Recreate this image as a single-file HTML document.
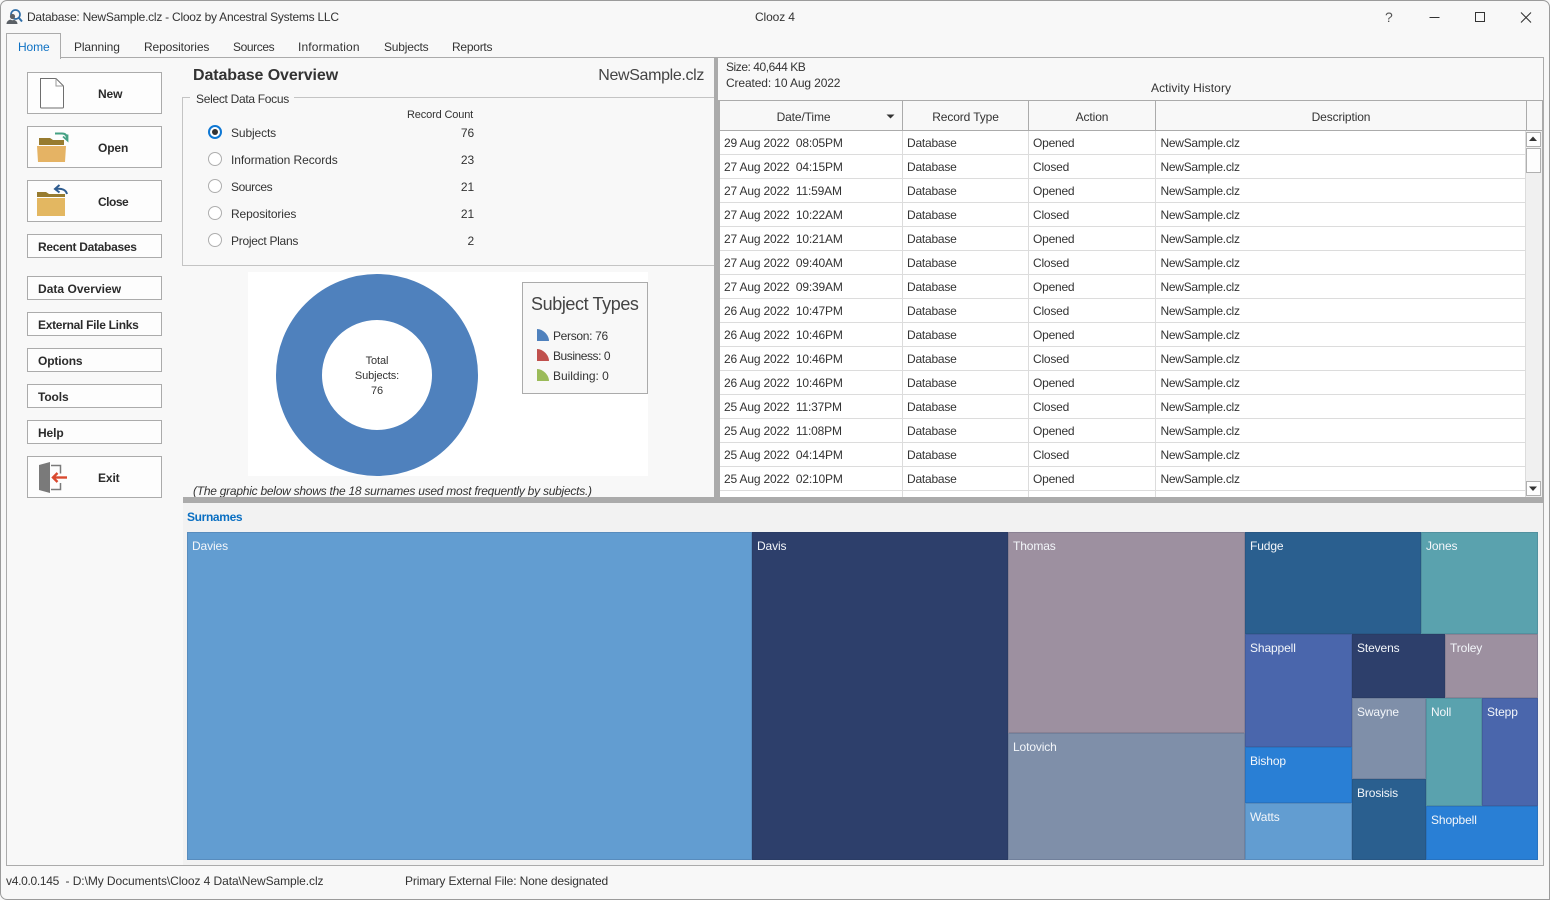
<!DOCTYPE html>
<html><head><meta charset="utf-8"><title>Clooz</title>
<style>
html,body{margin:0;padding:0;width:1550px;height:900px;overflow:hidden;background:#f8f8f8}
body{position:relative;font:12px/16px "Liberation Sans",sans-serif;color:#333;letter-spacing:-.12px}
div,svg,span.t{position:absolute}
.t{white-space:nowrap}
.b{background:#fdfdfd;border:1px solid #ababab;box-sizing:border-box;outline:0;font-weight:bold;color:#2b2b2b;white-space:nowrap}
.s{left:27px;width:135px;height:24px;line-height:24px;padding-left:10px}
.l{left:27px;width:135px;height:42px;line-height:42px}
.l span{position:absolute;top:0}
.r{width:14px;height:14px;box-sizing:border-box;border:1px solid #aeaeae;border-radius:50%;background:#fff;left:208px}
.h{top:109px;height:16px;text-align:center}
table{position:absolute;left:720px;top:131px;width:806px;border-collapse:collapse;table-layout:fixed;background:#fff}
td{height:21px;padding:2px 0 0 4.5px;border-bottom:1px solid #dcdcdc;border-right:1px solid #dcdcdc;white-space:nowrap;overflow:hidden;line-height:21px;color:#333;letter-spacing:-.22px}
td:first-child{padding-left:4px;letter-spacing:-.17px}
td:last-child{padding-left:5px;letter-spacing:-.27px}
.m div{box-sizing:border-box;padding:6px 0 0 5px;color:#f3f6fa;font-size:12px;line-height:16px;box-shadow:inset 0 0 0 1px rgba(30,40,70,.14)}
</style></head><body>
<!-- window frame -->
<div style="left:0;top:0;width:1548px;height:898px;border:1px solid #9b9b9b;border-radius:7px 7px 0 7px"></div>
<!-- title bar -->
<svg style="left:6px;top:8px" width="17" height="17" viewBox="0 0 17 17"><circle cx="9.500" cy="6.500" r="4.500" fill="none" stroke="#2f6ea8" stroke-width="1.700"/><path d="M13 10l3 3.500" stroke="#2f6ea8" stroke-width="2"/><path d="M0.500 16c0-2.500 2-4 4-4.500 .8.800 2.500 1 3.600.400 1.700.600 3.400 1.800 3.400 4.100z" fill="#5b6066"/><circle cx="6.500" cy="8.500" r="2.600" fill="#5b6066"/></svg>
<span class="t" style="left:27px;top:9px;letter-spacing:-.245px">Database: NewSample.clz - Clooz by Ancestral Systems LLC</span>
<span class="t" style="left:755px;top:9px">Clooz 4</span>
<span class="t" style="left:1385px;top:9px;color:#555;font-size:14px">?</span>
<svg style="left:1420px;top:8px" width="120" height="18"><path d="M9.500 9.500h10" stroke="#333"/><rect x="55.500" y="4.500" width="9" height="9" fill="none" stroke="#333"/><path d="M101 4.500l10 10M111 4.500l-10 10" stroke="#333" stroke-width="1.100"/></svg>
<!-- tabs -->
<div style="left:6px;top:57px;width:1536px;height:807px;border:1px solid #ababab;box-sizing:content-box"></div>
<div style="left:6px;top:33px;width:53px;height:25px;border:1px solid #ababab;border-bottom:0;background:#f8f8f8"></div>
<span class="t" style="left:18px;top:39px;color:#0f72c4">Home</span>
<span class="t" style="left:74px;top:39px">Planning</span>
<span class="t" style="left:144px;top:39px">Repositories</span>
<span class="t" style="left:233px;top:39px;letter-spacing:-.4px">Sources</span>
<span class="t" style="left:298px;top:39px;letter-spacing:.15px">Information</span>
<span class="t" style="left:384px;top:39px;letter-spacing:-.2px">Subjects</span>
<span class="t" style="left:452px;top:39px;letter-spacing:-.25px">Reports</span>
<!-- left buttons -->
<div class="b l" style="top:72px"><span style="left:70px">New</span></div>
<div class="b l" style="top:126px"><span style="left:70px">Open</span></div>
<div class="b l" style="top:180px"><span style="left:70px;letter-spacing:-.5px">Close</span></div>
<div class="b s" style="top:234px;letter-spacing:-.3px">Recent Databases</div>
<div class="b s" style="top:276px;letter-spacing:.03px">Data Overview</div>
<div class="b s" style="top:312px;letter-spacing:-.29px">External File Links</div>
<div class="b s" style="top:348px">Options</div>
<div class="b s" style="top:384px">Tools</div>
<div class="b s" style="top:420px">Help</div>
<div class="b l" style="top:456px"><span style="left:70px">Exit</span></div>
<svg style="left:38px;top:76px" width="28" height="34" viewBox="0 0 28 34"><path d="M2.500 2.500h15.500l7.500 7.500v21a1 1 0 0 1-1 1h-21a1 1 0 0 1-1-1z" fill="#fff" stroke="#6e6e6e"/><path d="M18 2.500v7.500h7.500" fill="none" stroke="#9a9a9a"/></svg>
<svg style="left:36px;top:131px" width="36" height="34" viewBox="0 0 36 34"><path d="M3 7h11l3 2h11v5H3z" fill="#977b2f"/><path d="M1 15h29l-1 16H2z" fill="#e5b364"/><path d="M19 2.500h7c3 0 5 1.500 5 5.500" fill="none" stroke="#45a184" stroke-width="2"/><path d="M27 5.500l4.500 4 0-6" fill="none" stroke="#45a184" stroke-width="1.800"/></svg>
<svg style="left:36px;top:183px" width="36" height="34" viewBox="0 0 36 34"><path d="M1 9h9l3 2h16v3H1z" fill="#977b2f"/><path d="M1 15h28v18H1z" fill="#e3b761"/><path d="M31 11c-1-4-5-6-11-5" fill="none" stroke="#2f5c8f" stroke-width="2"/><path d="M23.500 2l-4.500 4 4.500 3.500" fill="none" stroke="#2f5c8f" stroke-width="2"/></svg>
<svg style="left:38px;top:460px" width="32" height="34" viewBox="0 0 32 34"><path d="M1 5l11-3v31l-11-3z" fill="#7a7a7a"/><path d="M13 5.500h9.500v8M22.500 23v6.500h-9.500" fill="none" stroke="#7a7a7a" stroke-width="1.500"/><path d="M16 17.500h13" stroke="#d9492f" stroke-width="2.400"/><path d="M19.500 13l-4.500 4.500 4.500 4.500" fill="none" stroke="#d9492f" stroke-width="2.400"/></svg>
<!-- overview -->
<span class="t" style="left:193px;top:66px;font-size:16px;line-height:20px;font-weight:bold;color:#333;letter-spacing:-.1px">Database Overview</span>
<span class="t" style="right:846px;top:66px;font-size:16px;line-height:20px;color:#444;letter-spacing:-.35px">NewSample.clz</span>
<div style="left:182px;top:97px;width:532px;height:167px;border:1px solid #c4c4c4;border-right:0;box-sizing:content-box"></div>
<div style="left:190px;top:92px;width:104px;height:12px;background:#f8f8f8"></div>
<span class="t" style="left:196px;top:91px;letter-spacing:-.3px">Select Data Focus</span>
<span class="t" style="left:407px;top:107px;font-size:11px;letter-spacing:-.15px">Record Count</span>
<div class="r" style="top:125px;border:2px solid #0f78d4"><div style="left:2px;top:2px;width:6px;height:6px;border-radius:50%;background:#333"></div></div>
<div class="r" style="top:152px"></div><div class="r" style="top:179px"></div><div class="r" style="top:206px"></div><div class="r" style="top:233px"></div>
<span class="t" style="left:231px;top:125px">Subjects</span><span class="t" style="right:1076px;top:125px">76</span>
<span class="t" style="left:231px;top:152px;letter-spacing:-.07px">Information Records</span><span class="t" style="right:1076px;top:152px">23</span>
<span class="t" style="left:231px;top:179px;letter-spacing:-.4px">Sources</span><span class="t" style="right:1076px;top:179px">21</span>
<span class="t" style="left:231px;top:206px">Repositories</span><span class="t" style="right:1076px;top:206px">21</span>
<span class="t" style="left:231px;top:233px;letter-spacing:-.28px">Project Plans</span><span class="t" style="right:1076px;top:233px">2</span>
<!-- chart -->
<div style="left:248px;top:272px;width:400px;height:204px;background:#fff"></div>
<svg style="left:248px;top:272px" width="260" height="204"><circle cx="129" cy="103" r="78" fill="none" stroke="#4f81bd" stroke-width="46"/></svg>
<span class="t" style="left:327px;top:354px;width:100px;text-align:center;font-size:11px;line-height:15px;color:#333">Total<br>Subjects:<br>76</span>
<div style="left:522px;top:282px;width:124px;height:110px;border:1px solid #ababab;background:#f8f8f8"></div>
<span class="t" style="left:531px;top:292px;font-size:18px;line-height:24px;color:#444;letter-spacing:-.4px">Subject Types</span>
<svg style="left:537px;top:329px" width="12" height="54"><path d="M0 0c6 0 12 6 12 12H0z" fill="#4f81bd"/><path d="M0 20c6 0 12 6 12 12H0z" fill="#c0504d"/><path d="M0 40c6 0 12 6 12 12H0z" fill="#9bbb59"/></svg>
<span class="t" style="left:553px;top:328px;letter-spacing:-.32px">Person: 76</span>
<span class="t" style="left:553px;top:348px;letter-spacing:-.45px">Business: 0</span>
<span class="t" style="left:553px;top:368px;letter-spacing:-.02px">Building: 0</span>
<span class="t" style="left:193px;top:483px;font-style:italic;letter-spacing:-.25px">(The graphic below shows the 18 surnames used most frequently by subjects.)</span>
<!-- activity -->
<span class="t" style="left:726px;top:59px;letter-spacing:-.45px">Size: 40,644 KB</span>
<span class="t" style="left:726px;top:75px;letter-spacing:-.12px">Created: 10 Aug 2022</span>
<span class="t" style="left:1151px;top:80px;letter-spacing:.09px">Activity History</span>
<div style="left:720px;top:100px;width:823px;height:1px;background:#ababab"></div>
<div class="h" style="left:720px;width:167px">Date/Time</div>
<svg style="left:886px;top:114px" width="10" height="6"><path d="M0.500 0.500h8l-4 4z" fill="#333"/></svg>
<div class="h" style="left:903px;width:125px">Record Type</div>
<div class="h" style="left:1029px;width:126px">Action</div>
<div class="h" style="left:1156px;width:370px">Description</div>
<div style="left:902px;top:100px;width:1px;height:30px;background:#ababab"></div>
<div style="left:1028px;top:100px;width:1px;height:30px;background:#ababab"></div>
<div style="left:1155px;top:100px;width:1px;height:30px;background:#ababab"></div>
<div style="left:1526px;top:100px;width:1px;height:30px;background:#ababab"></div>
<div style="left:720px;top:130px;width:823px;height:1px;background:#ababab"></div>
<div style="left:720px;top:131px;width:806px;height:366px;background:#fff;overflow:hidden">
<table style="left:0;top:0"><colgroup><col style="width:182px"><col style="width:126px"><col style="width:127px"><col></colgroup>
<tr><td>29 Aug 2022&nbsp; 08:05PM</td><td>Database</td><td>Opened</td><td>NewSample.clz</td></tr>
<tr><td>27 Aug 2022&nbsp; 04:15PM</td><td>Database</td><td>Closed</td><td>NewSample.clz</td></tr>
<tr><td>27 Aug 2022&nbsp; 11:59AM</td><td>Database</td><td>Opened</td><td>NewSample.clz</td></tr>
<tr><td>27 Aug 2022&nbsp; 10:22AM</td><td>Database</td><td>Closed</td><td>NewSample.clz</td></tr>
<tr><td>27 Aug 2022&nbsp; 10:21AM</td><td>Database</td><td>Opened</td><td>NewSample.clz</td></tr>
<tr><td>27 Aug 2022&nbsp; 09:40AM</td><td>Database</td><td>Closed</td><td>NewSample.clz</td></tr>
<tr><td>27 Aug 2022&nbsp; 09:39AM</td><td>Database</td><td>Opened</td><td>NewSample.clz</td></tr>
<tr><td>26 Aug 2022&nbsp; 10:47PM</td><td>Database</td><td>Closed</td><td>NewSample.clz</td></tr>
<tr><td>26 Aug 2022&nbsp; 10:46PM</td><td>Database</td><td>Opened</td><td>NewSample.clz</td></tr>
<tr><td>26 Aug 2022&nbsp; 10:46PM</td><td>Database</td><td>Closed</td><td>NewSample.clz</td></tr>
<tr><td>26 Aug 2022&nbsp; 10:46PM</td><td>Database</td><td>Opened</td><td>NewSample.clz</td></tr>
<tr><td>25 Aug 2022&nbsp; 11:37PM</td><td>Database</td><td>Closed</td><td>NewSample.clz</td></tr>
<tr><td>25 Aug 2022&nbsp; 11:08PM</td><td>Database</td><td>Opened</td><td>NewSample.clz</td></tr>
<tr><td>25 Aug 2022&nbsp; 04:14PM</td><td>Database</td><td>Closed</td><td>NewSample.clz</td></tr>
<tr><td>25 Aug 2022&nbsp; 02:10PM</td><td>Database</td><td>Opened</td><td>NewSample.clz</td></tr>
<tr><td></td><td></td><td></td><td></td></tr>
</table></div>
<!-- scrollbar -->
<div style="left:1526px;top:131px;width:16px;height:366px;background:#f0f0f0"></div>
<div style="left:1526px;top:132px;width:13px;height:13px;border:1px solid #b0b0b0;background:#fdfdfd"></div>
<svg style="left:1528px;top:136px" width="10" height="6"><path d="M5 .5l4 4.500H1z" fill="#333"/></svg>
<div style="left:1526px;top:148px;width:13px;height:23px;border:1px solid #b0b0b0;background:#fdfdfd"></div>
<div style="left:1526px;top:481px;width:13px;height:13px;border:1px solid #b0b0b0;background:#fdfdfd"></div>
<svg style="left:1528px;top:486px" width="10" height="6"><path d="M1 .5h8L5 5z" fill="#333"/></svg>
<div style="left:1542px;top:100px;width:1px;height:397px;background:#ababab"></div>
<!-- splitters -->
<div style="left:714px;top:57px;width:4px;height:44px;background:#ababab"></div>
<div style="left:714px;top:100px;width:6px;height:398px;background:#ababab"></div>
<div style="left:183px;top:497px;width:1360px;height:6px;background:#ababab"></div>
<!-- surnames -->
<div style="left:183px;top:503px;width:1360px;height:362px;background:#f2f2f2"></div>
<span class="t" style="left:187px;top:509px;font-weight:bold;color:#0a6fc2;letter-spacing:-.35px">Surnames</span>
<div class="m" style="left:0;top:0;width:1550px;height:900px">
<div style="left:187px;top:532px;width:565px;height:328px;background:#629dd1">Davies</div>
<div style="left:752px;top:532px;width:256px;height:328px;background:#2d3f6b">Davis</div>
<div style="left:1008px;top:532px;width:237px;height:201px;background:#9d90a0">Thomas</div>
<div style="left:1008px;top:733px;width:237px;height:127px;background:#7f8fa9">Lotovich</div>
<div style="left:1245px;top:532px;width:176px;height:102px;background:#2a5f8f">Fudge</div>
<div style="left:1421px;top:532px;width:117px;height:102px;background:#5aa2ae">Jones</div>
<div style="left:1245px;top:634px;width:107px;height:113px;background:#4a66ac">Shappell</div>
<div style="left:1352px;top:634px;width:93px;height:64px;background:#2d3f6b">Stevens</div>
<div style="left:1445px;top:634px;width:93px;height:64px;background:#9d90a0">Troley</div>
<div style="left:1352px;top:698px;width:74px;height:81px;background:#7f8fa9">Swayne</div>
<div style="left:1426px;top:698px;width:56px;height:108px;background:#5aa2ae">Noll</div>
<div style="left:1482px;top:698px;width:56px;height:108px;background:#4a66ac">Stepp</div>
<div style="left:1245px;top:747px;width:107px;height:56px;background:#297fd5">Bishop</div>
<div style="left:1245px;top:803px;width:107px;height:57px;background:#629dd1">Watts</div>
<div style="left:1352px;top:779px;width:74px;height:81px;background:#2a5f8f">Brosisis</div>
<div style="left:1426px;top:806px;width:112px;height:54px;background:#297fd5">Shopbell</div>
</div>
<!-- status -->
<span class="t" style="left:6px;top:873px;letter-spacing:-.08px"><span style="letter-spacing:-.3px">v4.0.0.145</span>&nbsp; - D:\My Documents\Clooz 4 Data\NewSample.clz</span>
<span class="t" style="left:405px;top:873px;letter-spacing:-.15px">Primary External File: None designated</span>
</body></html>
